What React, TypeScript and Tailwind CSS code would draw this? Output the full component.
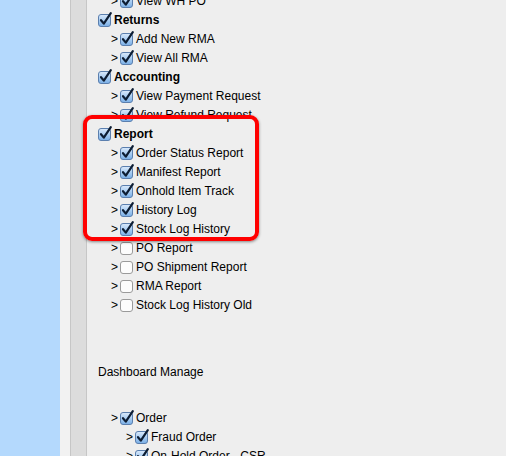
import React from "react";

const Checked = () => (
  <svg width="14" height="14" viewBox="0 0 14 14" className="shrink-0 overflow-visible">
    <defs>
      <linearGradient id="cbg" x1="0" y1="0" x2="0" y2="1">
        <stop offset="0" stopColor="#dbeafb" />
        <stop offset="0.5" stopColor="#a9cdf2" />
        <stop offset="1" stopColor="#79aee6" />
      </linearGradient>
    </defs>
    <rect x="0.5" y="1.5" width="12" height="12" rx="2.5" fill="url(#cbg)" stroke="#5b7fae" />
    <path d="M3 7.2 L5.8 10.6 L12.8 0.2" fill="none" stroke="#0d1d33" strokeWidth="2.2" strokeLinecap="round" strokeLinejoin="round" />
  </svg>
);

const Unchecked = () => (
  <svg width="14" height="14" viewBox="0 0 14 14" className="shrink-0">
    <rect x="0.5" y="1.5" width="12" height="12" rx="2.5" fill="#fcfcfc" stroke="#9a9a9a" />
  </svg>
);

type Item = { label: string; checked?: boolean; level: number; bold?: boolean };

const Row = ({ label, checked = true, level, bold }: Item) => (
  <div className="flex h-[19px] items-center whitespace-nowrap">
    {level === 0 ? (
      <div className="flex items-center pl-[98px]">
        {checked ? <Checked /> : <Unchecked />}
        <span className={"ml-[2px] " + (bold ? "font-bold" : "")}>{label}</span>
      </div>
    ) : level === 1 ? (
      <div className="flex items-center pl-[111px]">
        <span className="w-[9px] text-[12px]">&gt;</span>
        {checked ? <Checked /> : <Unchecked />}
        <span className="ml-[2px]">{label}</span>
      </div>
    ) : (
      <div className="flex items-center pl-[126px]">
        <span className="w-[9px] text-[12px]">&gt;</span>
        {checked ? <Checked /> : <Unchecked />}
        <span className="ml-[2px]">{label}</span>
      </div>
    )}
  </div>
);

const top: Item[] = [
  { label: "View WH PO", level: 1 },
  { label: "Returns", level: 0, bold: true },
  { label: "Add New RMA", level: 1 },
  { label: "View All RMA", level: 1 },
  { label: "Accounting", level: 0, bold: true },
  { label: "View Payment Request", level: 1 },
  { label: "View Refund Request", level: 1 },
  { label: "Report", level: 0, bold: true },
  { label: "Order Status Report", level: 1 },
  { label: "Manifest Report", level: 1 },
  { label: "Onhold Item Track", level: 1 },
  { label: "History Log", level: 1 },
  { label: "Stock Log History", level: 1 },
  { label: "PO Report", level: 1, checked: false },
  { label: "PO Shipment Report", level: 1, checked: false },
  { label: "RMA Report", level: 1, checked: false },
  { label: "Stock Log History Old", level: 1, checked: false },
];

const dash: Item[] = [
  { label: "Order", level: 1 },
  { label: "Fraud Order", level: 2 },
  { label: "On-Hold Order - CSR", level: 2 },
];

export default function App() {
  return (
    <div
      className="relative flex h-[456px] w-[506px] overflow-hidden bg-[#eeeeee] text-[12px] text-black"
      style={{ fontFamily: '"Liberation Sans", Arial, sans-serif' }}
    >
      <div className="absolute left-0 top-0 h-full w-[60px] bg-[#b4d9fd]" />
      <div className="absolute left-[60px] top-0 h-full w-[10px] bg-[#f2f2f2]" />
      <div className="absolute left-[70px] top-0 h-full w-[17px] border-x border-[#c6c6c6] bg-[#dcdcdc]" />
      <div className="relative flex w-full flex-col pt-0">
        <div className="mt-[-9px]">
          {top.map((it, i) => (
            <Row key={i} {...it} />
          ))}
        </div>
        <div className="mt-[49px] flex h-[19px] items-center pl-[98px]">Dashboard Manage</div>
        <div className="mt-[27px]">
          {dash.map((it, i) => (
            <Row key={i} {...it} />
          ))}
        </div>
      </div>
      <div className="absolute left-[83px] top-[115px] h-[126px] w-[176px] rounded-[9px] border-[4px] border-[#ff0000] shadow-[0_1px_3px_rgba(0,0,0,0.45)]" />
    </div>
  );
}
